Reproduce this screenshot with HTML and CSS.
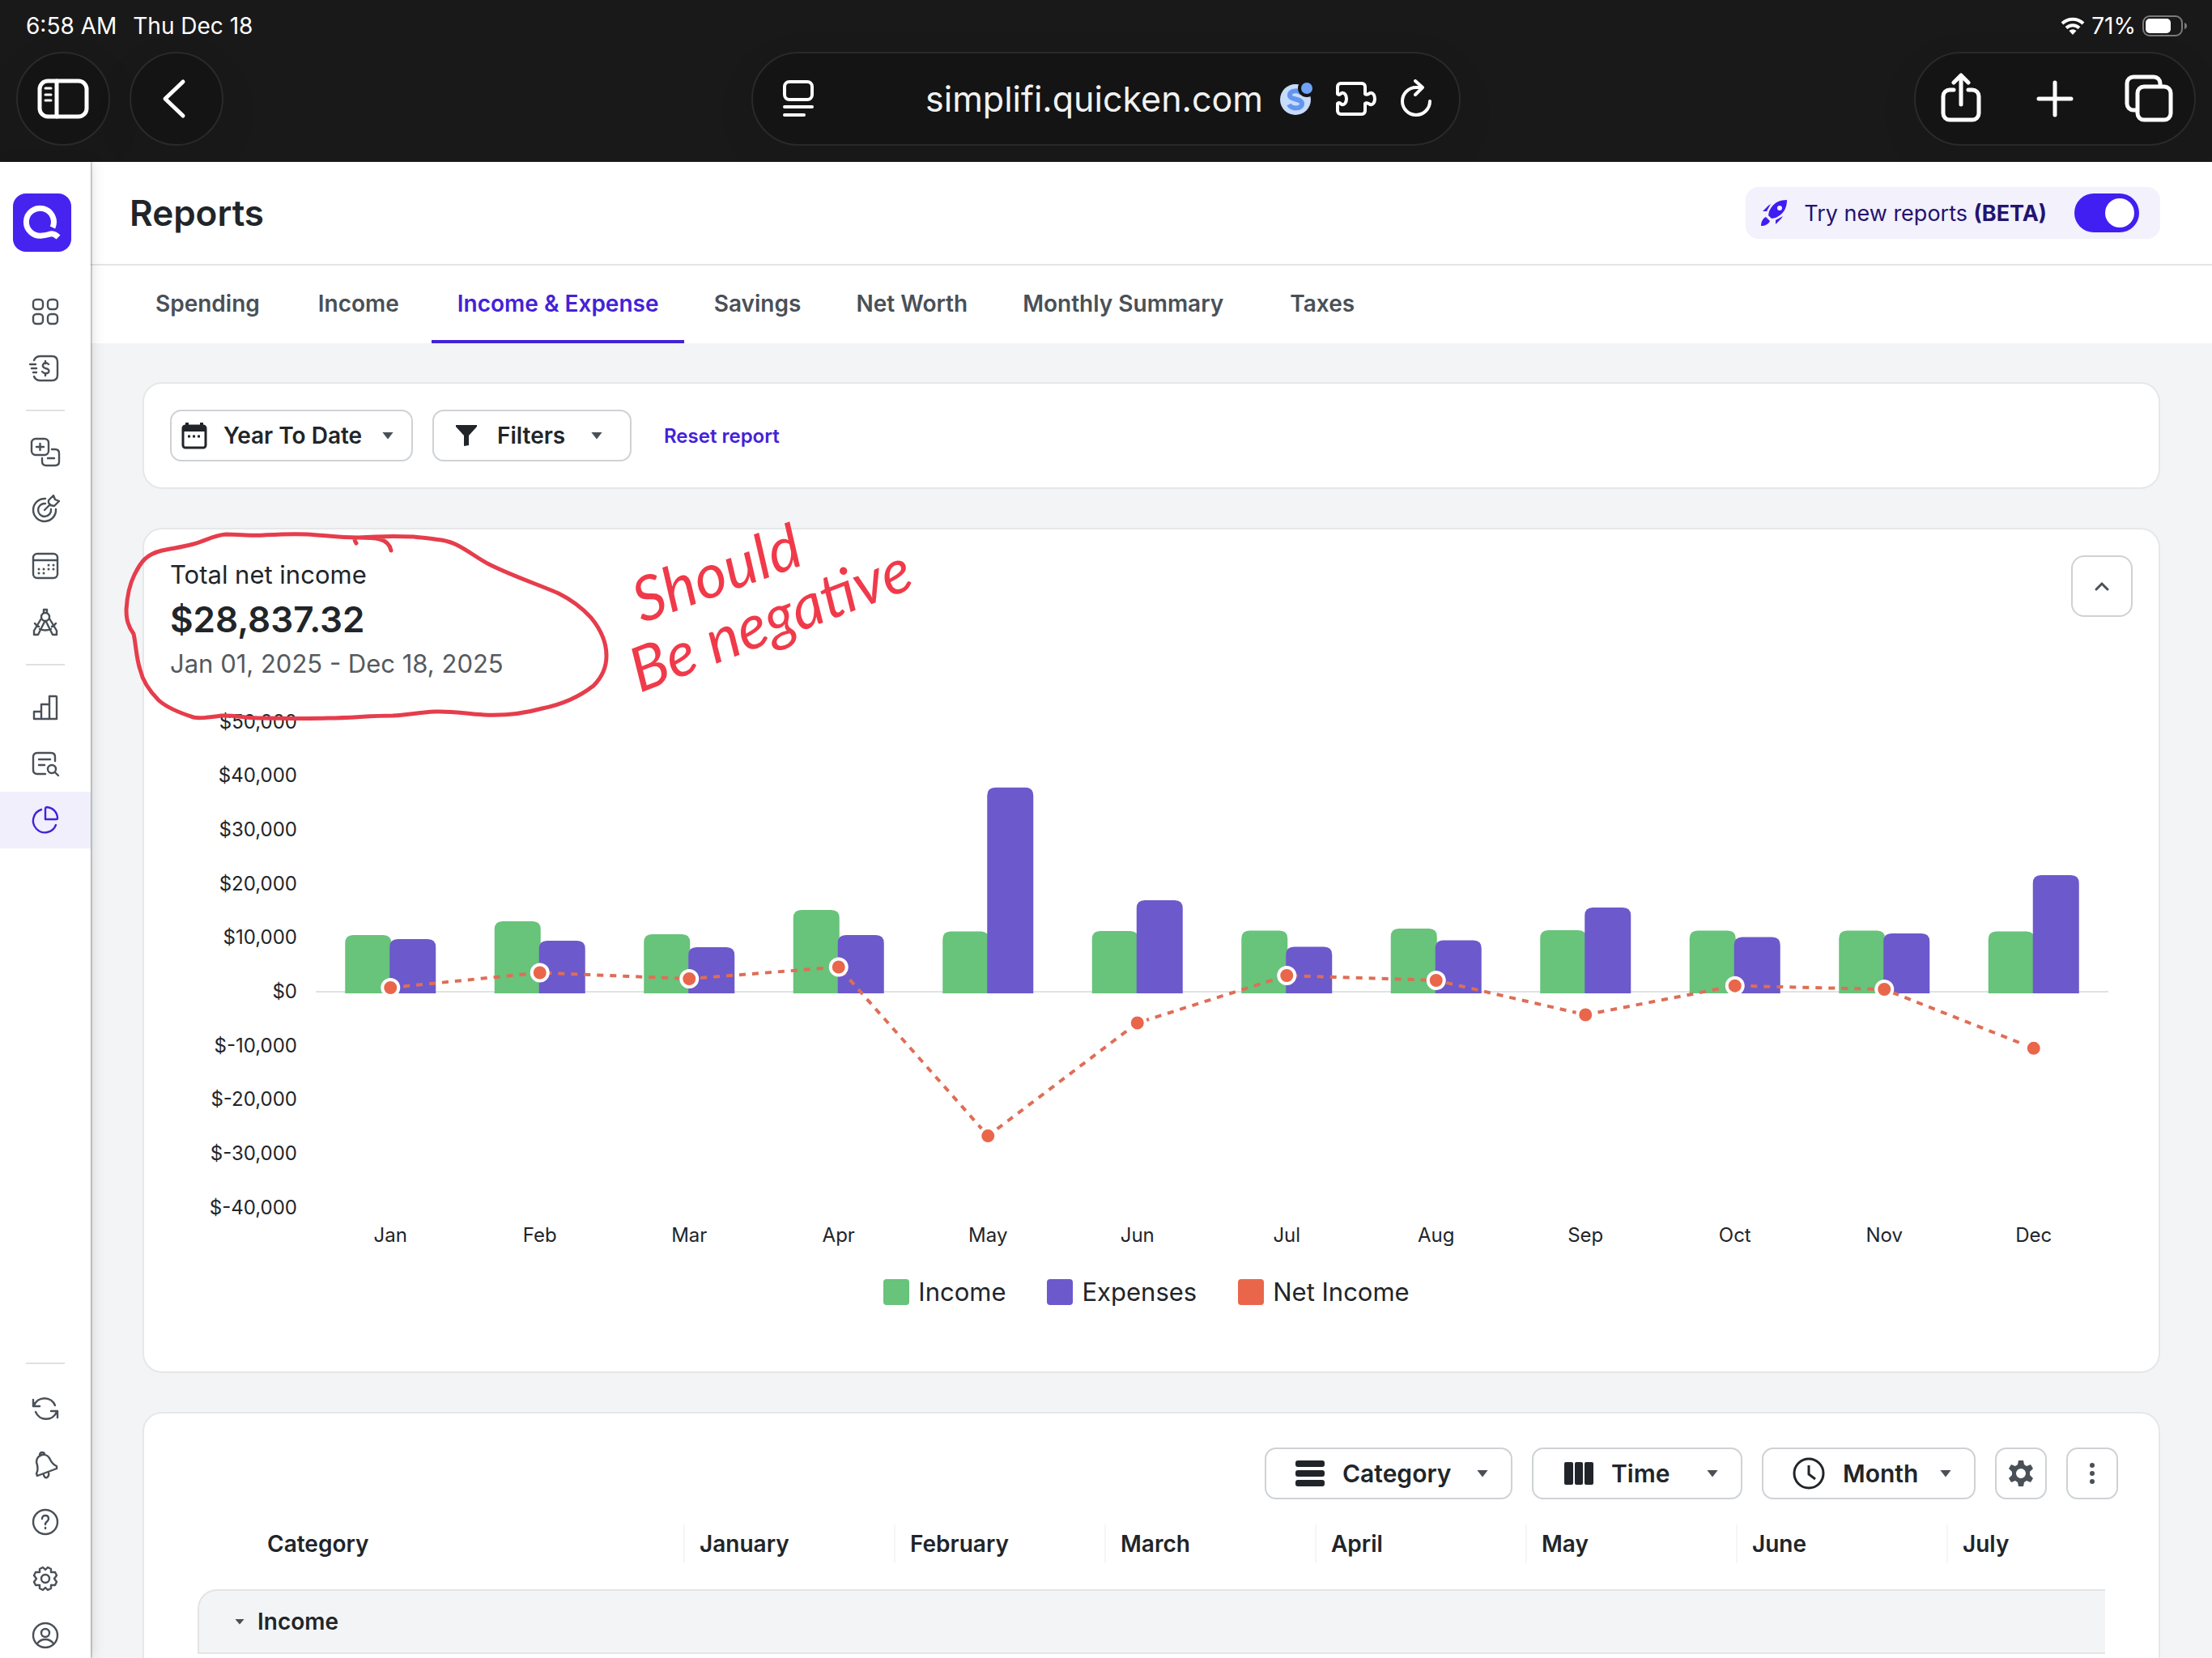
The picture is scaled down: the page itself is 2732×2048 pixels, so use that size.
FILE: index.html
```html
<!DOCTYPE html>
<html lang="en">
<head>
  <meta charset="UTF-8">
  <meta name="viewport" content="width=device-width, initial-scale=1">
  <title>Reports - Income &amp; Expense</title>
  <link rel="stylesheet" href="styles.css">
</head>
<body>
  <!-- Browser chrome -->
  <header class="chrome">
    <div class="status-bar">
      <div class="status-left">
        <span>6:58 AM</span>
        <span>Thu Dec 18</span>
      </div>
      <div class="status-right">
        <svg class="wifi" width="30" height="22" viewBox="0 0 30 22">
          <path d="M2 8 a18.500 18.500 0 0 1 26 0" stroke="#fff" stroke-width="4" fill="none"/>
          <path d="M7 13.500 a11.500 11.500 0 0 1 16 0" stroke="#fff" stroke-width="4" fill="none"/>
          <path d="M15 22 l-4.500 -5 a6.500 6.500 0 0 1 9 0 z" fill="#fff"/>
        </svg>
        <span>71%</span>
        <svg width="56" height="26" viewBox="0 0 56 26">
          <rect x="1" y="1" width="48" height="24" rx="8" fill="none" stroke="#7b7b7b" stroke-width="2"/>
          <rect x="4" y="4" width="31" height="18" rx="5" fill="#fff"/>
          <path d="M52 9 q3 1 3 4 t-3 4 z" fill="#7b7b7b"/>
        </svg>
      </div>
    </div>
    <div class="toolbar">
      <div class="toolbar-left">
        <button type="button" class="round-btn" aria-label="Show sidebar">
          <svg width="64" height="52" viewBox="0 0 64 52" class="ink">
            <rect x="3" y="4" width="58" height="44" rx="10"/>
            <path d="M24 4 V48"/>
            <path class="ink-thin" d="M10 13 H17 M10 21 H17 M10 28 H17"/>
          </svg>
        </button>
        <button type="button" class="round-btn" aria-label="Back">
          <svg width="64" height="52" viewBox="0 0 64 52" class="ink">
            <path d="M40 5 L18 26 L40 47"/>
          </svg>
        </button>
      </div>
      <div class="address">
        <button type="button" class="plain-btn" aria-label="Reader">
          <svg width="40" height="48" viewBox="0 0 40 48" class="ink ink-mid">
            <rect x="3" y="3" width="34" height="22" rx="6"/>
            <path d="M3 34 H37 M3 44 H27"/>
          </svg>
        </button>
        <div class="address-right">
          <span class="url">simplifi.quicken.com</span>
          <svg width="42" height="42" viewBox="0 0 42 42">
            <circle cx="20" cy="22" r="19" fill="#c7dcfb"/>
            <path d="M28 15 c-3 -5 -14 -5 -15 1 c-1 7 15 4 15 11 c0 7 -13 7 -16 1" fill="none" stroke="#6496f0" stroke-width="6"/>
            <circle cx="34" cy="8" r="11" fill="#141414"/>
            <circle cx="34" cy="8" r="7" fill="#6fa3f7"/>
          </svg>
          <button type="button" class="plain-btn" aria-label="Extensions">
            <svg width="54" height="48" viewBox="0 0 54 48" class="ink ink-mid">
              <path d="M8 5 H34 a4 4 0 0 1 4 4 V18 c2 2 4 0 6 -1 c8 -2 8 16 0 14 c-2 -1 -4 -3 -6 -1 V39 a4 4 0 0 1 -4 4 H8 a4 4 0 0 1 -4 -4 V30 c2 -2 4 0 5 1 c8 2 8 -16 0 -14 c-1 1 -3 3 -5 1 V9 a4 4 0 0 1 4 -4 z"/>
            </svg>
          </button>
          <button type="button" class="plain-btn" aria-label="Reload">
            <svg width="42" height="48" viewBox="0 0 42 48" class="ink ink-mid">
              <path d="M38 27 a17 17 0 1 1 -17 -17 h6"/>
              <path d="M20 2 L29 10 L20 19"/>
            </svg>
          </button>
        </div>
      </div>
      <div class="toolbar-right">
        <div class="pill">
          <button type="button" class="plain-btn" aria-label="Share">
            <svg width="52" height="64" viewBox="0 0 52 64" class="ink">
              <path d="M17 21 H12 a8 8 0 0 0 -8 8 V50 a8 8 0 0 0 8 8 H40 a8 8 0 0 0 8 -8 V29 a8 8 0 0 0 -8 -8 H35"/>
              <path d="M26 39 V4 M17 12 L26 3 L35 12"/>
            </svg>
          </button>
          <button type="button" class="plain-btn" aria-label="New tab">
            <svg width="52" height="52" viewBox="0 0 52 52" class="ink">
              <path d="M28 6 V46 M8 26 H48"/>
            </svg>
          </button>
          <button type="button" class="plain-btn" aria-label="Tabs">
            <svg width="60" height="60" viewBox="0 0 60 60" class="ink">
              <rect x="16" y="15" width="41" height="41" rx="8"/>
              <path d="M15 44 H11 a8 8 0 0 1 -8 -8 V11 a8 8 0 0 1 8 -8 H36 a8 8 0 0 1 8 8 V14"/>
            </svg>
          </button>
        </div>
      </div>
    </div>
  </header>

  <div class="app">
    <!-- Left navigation -->
    <nav class="sidebar" aria-label="Main">
      <a href="#" class="logo" aria-label="Home">
        <svg width="72" height="72" viewBox="0 0 72 72">
          <rect width="72" height="72" rx="16" fill="#4723f0"/>
          <path d="M49 42 A17 17 0 1 0 36 52 C45 52 48 46 56 54" fill="none" stroke="#fff" stroke-width="7"/>
        </svg>
      </a>
      <a href="#" class="nav-item" aria-label="Dashboard">
        <svg viewBox="0 0 40 40"><rect x="5" y="5" width="12" height="12" rx="4"/><rect x="23" y="5" width="12" height="12" rx="4"/><rect x="5" y="23" width="12" height="12" rx="4"/><rect x="23" y="23" width="12" height="12" rx="4"/></svg>
      </a>
      <a href="#" class="nav-item" aria-label="Spending plan">
        <svg viewBox="0 0 40 40"><path d="M6 10 q2 -5 8 -5 H28 q7 0 7 7 V28 q0 7 -7 7 H14 q-6 0 -8 -5"/><path d="M1 15 H8 M3 20 H9 M5 25 H9"/><path d="M24 15 q-3 -3 -6 -1 q-3 4 2 6 q6 1 4 5 q-4 3 -8 -1 M20 11 V14 M20 26 V29"/></svg>
      </a>
      <hr class="nav-divider">
      <a href="#" class="nav-item" aria-label="Transactions">
        <svg viewBox="0 0 40 40"><rect x="3" y="3" width="21" height="20" rx="5"/><path d="M9 13 H18 M13.500 9 V17"/><path d="M28 16 H32 q5 0 5 5 V31 q0 5 -5 5 H21 q-5 0 -5 -5 V27 M23 27 H31"/></svg>
      </a>
      <a href="#" class="nav-item" aria-label="Goals">
        <svg viewBox="0 0 40 40"><path d="M20 7 A14 14 0 1 0 33 20 M20 13 A8 8 0 1 0 27 20 M19 21 L26 14"/><path d="M24 12 V9 L30 3 L32 8 L37 10 L31 16 L26 15 z"/></svg>
      </a>
      <a href="#" class="nav-item" aria-label="Bills">
        <svg viewBox="0 0 40 40"><rect x="5" y="5" width="30" height="30" rx="5"/><path d="M5 13 H35"/><path class="dots" d="M12 24 h0 M18 24 h0 M24 19 h0 M30 19 h0 M12 29 h0 M18 29 h0 M24 24 h0 M30 24 h0"/></svg>
      </a>
      <a href="#" class="nav-item" aria-label="Planning">
        <svg viewBox="0 0 40 40"><circle cx="20" cy="13" r="5"/><path d="M18 8 V4 H22 V8"/><path d="M15 15 L6 30 V35 H11 L19 19 M25 15 L34 30 V35 H29 L21 19 M13 28 q7 3 14 0 M7 21 q2 3 5 4 M33 21 q-2 3 -5 4"/></svg>
      </a>
      <hr class="nav-divider">
      <a href="#" class="nav-item" aria-label="Investments">
        <svg viewBox="0 0 40 40"><path d="M6 35 V26 H15 M15 35 V17 H25 M25 35 V7 H33 q1 0 1 1 V35 H6"/></svg>
      </a>
      <a href="#" class="nav-item" aria-label="Watchlist">
        <svg viewBox="0 0 40 40"><path d="M20 33 H10 q-5 0 -5 -5 V12 q0 -5 5 -5 H27 q5 0 5 5 V17 M12 15 H26 M12 22 H19"/><circle cx="28" cy="27" r="5"/><path d="M32 31 L36 35"/></svg>
      </a>
      <a href="#" class="nav-item active" aria-label="Reports" aria-current="page">
        <svg viewBox="0 0 40 40"><path d="M15 7 A14.500 14.500 0 1 0 33 26"/><path d="M20 6 q0 -2 2 -2 A14 14 0 0 1 35 18 q0 1 -2 1 H20 z"/></svg>
      </a>

      <div class="nav-bottom">
        <hr class="nav-divider">
        <a href="#" class="nav-item" aria-label="Sync">
          <svg viewBox="0 0 40 40"><path d="M5 9 V17 H13 M6 16 A14 14 0 0 1 32 16 M35 31 V23 H27 M34 24 A14 14 0 0 1 8 24"/></svg>
        </a>
        <a href="#" class="nav-item" aria-label="Notifications">
          <svg viewBox="0 0 40 40"><path d="M10 33 L9 30 Q12 25 9 16 Q9 9 16 7 Q23 6 26 13 Q29 19 34 21 L34 24 z M13 8 q0 -4 3 -4 t3 3 M18 32 q1 4 4 3 q3 -2 2 -6"/></svg>
        </a>
        <a href="#" class="nav-item" aria-label="Help">
          <svg viewBox="0 0 40 40"><circle cx="20" cy="20" r="15"/><path d="M16 16 q0 -4 4 -4 t4 4 q0 2 -2 3.500 t-2 3.500 M20 27 v1"/></svg>
        </a>
        <a href="#" class="nav-item" aria-label="Settings">
          <svg viewBox="0 0 40 40"><circle cx="20" cy="20" r="5"/><path d="M17 6 l3 3 l3 -3 l4 2 v4 h5 l2 4 l-3 4 l3 4 l-2 4 h-5 v4 l-4 2 l-3 -3 l-3 3 l-4 -2 v-4 h-5 l-2 -4 l3 -4 l-3 -4 l2 -4 h5 v-4 z"/></svg>
        </a>
        <a href="#" class="nav-item" aria-label="Account">
          <svg viewBox="0 0 40 40"><circle cx="20" cy="20" r="15"/><circle cx="20" cy="17" r="5"/><path d="M10 30 q4 -5 10 -5 t10 5"/></svg>
        </a>
      </div>
    </nav>

    <main class="main">
      <div class="page-header">
        <h1>Reports</h1>
        <label class="beta" for="betaToggle">
          <svg width="34" height="34" viewBox="0 0 34 34" fill="#3f1df2">
            <path d="M33 1 C22 1 15 6 11 15 L10 20 L14 24 L19 23 C28 19 33 12 33 1 z M24 8 a3 3 0 1 1 0 6 a3 3 0 1 1 0 -6 z" fill-rule="evenodd"/>
            <path d="M10 8 L3 15 L8 15 L13 6 z M26 24 L19 31 L19 26 L28 21 z"/>
            <path d="M7 22 C3 24 1 28 1 33 C6 33 10 31 12 27 z"/>
          </svg>
          <span>Try new reports <b>(BETA)</b></span>
          <input type="checkbox" role="switch" id="betaToggle" class="toggle" checked>
        </label>
      </div>

      <nav class="tabs" aria-label="Reports">
        <a href="#">Spending</a>
        <a href="#">Income</a>
        <a href="#" class="active" aria-current="page">Income &amp; Expense</a>
        <a href="#">Savings</a>
        <a href="#">Net Worth</a>
        <a href="#">Monthly Summary</a>
        <a href="#">Taxes</a>
      </nav>

      <div class="content">
        <section class="card filter-card">
          <label class="dropdown dropdown-date">
            <svg width="32" height="36" viewBox="0 0 32 36">
              <path d="M7 2 V8 M25 2 V8" stroke="#212529" stroke-width="4"/>
              <rect x="2" y="6" width="28" height="27" rx="3" fill="none" stroke="#212529" stroke-width="3"/>
              <path d="M2 6 H30 V13 H2 z" fill="#212529"/>
              <path d="M8 19 h3 M14 19 h3 M20 19 h3" stroke="#212529" stroke-width="3"/>
            </svg>
            <select aria-label="Date range"><option>Year To Date</option></select>
            <span class="caret"></span>
          </label>
          <button type="button" class="dropdown dropdown-filter" aria-haspopup="true">
            <svg width="28" height="28" viewBox="0 0 28 28"><path d="M1 1 H27 V3 L17 14 V26 L11 27 V14 L1 3 z" fill="#212529"/></svg>
            <span>Filters</span>
            <span class="caret"></span>
          </button>
          <button type="button" class="link-btn">Reset report</button>
        </section>

        <section class="card chart-card">
          <div class="summary">
            <div class="totals">
              <p class="total-label">Total net income</p>
              <p class="total-value">$28,837.32</p>
              <p class="total-range">Jan 01, 2025 - Dec 18, 2025</p>
            </div>
            <button type="button" class="collapse-btn" aria-label="Collapse chart">
              <svg width="20" height="14" viewBox="0 0 20 14"><path d="M3 11 L10 4 L17 11" fill="none" stroke="#495057" stroke-width="3" stroke-linecap="round"/></svg>
            </button>
          </div>
          <svg class="chart" id="chart" viewBox="0 0 2424 680" role="img" aria-label="Income, expenses and net income by month"></svg>
          <ul class="legend">
            <li><span class="swatch swatch-income"></span>Income</li>
            <li><span class="swatch swatch-expenses"></span>Expenses</li>
            <li><span class="swatch swatch-net"></span>Net Income</li>
          </ul>

          <!-- Pen markup drawn over the card -->
          <svg class="markup" width="1000" height="260" viewBox="178 654 1000 260">
            <path d="M440 671 C438 668 436 664 442 664 C462 664 480 664 483 680 M442 664 C470 662 490 662 511 663 C540 666 552 667 564 673 C580 681 590 690 604 697 C634 712 665 722 690 733 C708 742 720 752 730 763 C744 780 749 795 749 810 C749 826 743 837 733 847 C715 861 695 870 670 875 C645 882 620 884 598 883 C575 882 560 878 538 879 C515 880 505 883 485 884 C455 884 435 887 405 887 C375 888 345 887 319 887 C300 887 290 883 273 884 C258 886 248 888 239 886 C220 880 205 873 196 865 C182 851 176 840 173 827 C168 812 168 796 165 783 C158 773 156 765 156 753 C157 736 160 722 166 710 C174 694 180 685 200 680 C214 677 224 676 239 672 C254 668 264 661 279 660 C296 660 310 662 326 661 C344 660 360 659 379 660 C400 661 418 664 442 664"/>
            <text x="793" y="770" transform="rotate(-20 793 770)">Should</text>
            <text x="790" y="856" transform="rotate(-21 790 856)">Be negative</text>
          </svg>
        </section>

        <section class="card table-card">
          <div class="table-tools">
            <label class="dropdown dropdown-large dropdown-category">
              <svg width="36" height="32" viewBox="0 0 36 32" fill="#212529"><rect width="36" height="8" rx="3"/><rect y="12" width="36" height="8" rx="3"/><rect y="24" width="36" height="8" rx="3"/></svg>
              <select aria-label="Rows"><option>Category</option></select>
              <span class="caret"></span>
            </label>
            <label class="dropdown dropdown-large dropdown-time">
              <svg width="36" height="28" viewBox="0 0 36 28" fill="#212529"><rect width="11" height="28" rx="2"/><rect x="13" width="10" height="28" rx="2"/><rect x="25" width="11" height="28" rx="2"/></svg>
              <select aria-label="Columns"><option>Time</option></select>
              <span class="caret"></span>
            </label>
            <label class="dropdown dropdown-large dropdown-month">
              <svg width="40" height="40" viewBox="0 0 40 40" fill="none" stroke="#212529" stroke-width="3"><circle cx="20" cy="20" r="18"/><path d="M20 10 V21 L28 27"/></svg>
              <select aria-label="Interval"><option>Month</option></select>
              <span class="caret"></span>
            </label>
            <button type="button" class="icon-btn" aria-label="Table settings">
              <svg width="32" height="32" viewBox="0 0 32 32"><path d="M13 0 h6 l1 5 l3 2 l5 -2 l3 5 l-4 4 v4 l4 4 l-3 5 l-5 -2 l-3 2 l-1 5 h-6 l-1 -5 l-3 -2 l-5 2 l-3 -5 l4 -4 v-4 l-4 -4 l3 -5 l5 2 l3 -2 z M16 10 a6 6 0 1 0 0 12 a6 6 0 1 0 0 -12 z" fill="#495057" fill-rule="evenodd"/></svg>
            </button>
            <button type="button" class="icon-btn" aria-label="More options">
              <svg width="8" height="28" viewBox="0 0 8 28" fill="#495057"><circle cx="4" cy="4" r="3"/><circle cx="4" cy="14" r="3"/><circle cx="4" cy="24" r="3"/></svg>
            </button>
          </div>
          <table class="report">
            <thead>
              <tr>
                <th class="col-category" scope="col">Category</th>
                <th scope="col">January</th>
                <th scope="col">February</th>
                <th scope="col">March</th>
                <th scope="col">April</th>
                <th scope="col">May</th>
                <th scope="col">June</th>
                <th class="col-last" scope="col">July</th>
              </tr>
            </thead>
            <tbody>
              <tr>
                <th class="group" scope="rowgroup" colspan="8"><span class="group-label"><span class="caret caret-small"></span>Income</span></th>
              </tr>
            </tbody>
          </table>
        </section>
      </div>
    </main>
  </div>

  <script src="script.js"></script>
</body>
</html>
```

FILE: styles.css
```css
* {
  box-sizing: border-box;
}

body {
  margin: 0;
  height: 100vh;
  display: flex;
  flex-direction: column;
  overflow: hidden;
  font-family: "Inter", "Liberation Sans", sans-serif;
  font-size: 28px;
  color: #212529;
  background: #f3f4f6;
}

button,
select {
  font: inherit;
  color: inherit;
  cursor: pointer;
}

a {
  text-decoration: none;
}

svg {
  flex-shrink: 0;
}

/* Browser chrome */
.chrome {
  flex-shrink: 0;
  height: 200px;
  background: #191919;
  color: #fff;
}

.status-bar {
  display: flex;
  align-items: center;
  justify-content: space-between;
  height: 64px;
  padding: 0 30px 0 32px;
}

.status-left {
  display: flex;
  gap: 20px;
}

.status-right {
  display: flex;
  align-items: center;
  gap: 8px;
}

.toolbar {
  display: grid;
  grid-template-columns: 1fr minmax(0, 876px) 1fr;
  padding: 0 20px;
}

.toolbar-left {
  display: flex;
  gap: 24px;
}

.toolbar-right {
  display: flex;
  justify-content: flex-end;
}

.round-btn,
.address,
.pill {
  height: 116px;
  border: 2px solid #2a2a2a;
  border-radius: 58px;
  background: #141414;
  box-shadow: 0 16px 60px rgba(0, 0, 0, 0.05);
}

.round-btn {
  display: flex;
  align-items: center;
  justify-content: center;
  width: 116px;
  padding: 0;
}

.address {
  display: flex;
  align-items: center;
  justify-content: space-between;
  padding: 0 32px 0 36px;
}

.address-right {
  display: flex;
  align-items: center;
  gap: 26px;
}

.url {
  margin-right: -6px;
  font-size: 43px;
  color: #f2f2f2;
}

.pill {
  display: flex;
  align-items: center;
  justify-content: space-between;
  width: 348px;
  padding: 0 26px 0 30px;
}

.plain-btn {
  display: flex;
  padding: 0;
  border: 0;
  background: none;
}

.ink {
  fill: none;
  stroke: #fff;
  stroke-width: 5;
  stroke-linecap: round;
  stroke-linejoin: round;
}

.ink-mid {
  stroke-width: 4;
}

.ink-thin {
  stroke-width: 3;
}

/* App layout */
.app {
  flex: 1;
  min-height: 0;
  display: flex;
}

.sidebar {
  z-index: 1;
  flex-shrink: 0;
  display: flex;
  flex-direction: column;
  width: 112px;
  background: #fff;
  box-shadow: 1px 0 2px rgba(0, 0, 0, 0.35), 2px 0 16px rgba(0, 0, 0, 0.12);
}

.logo {
  display: flex;
  margin: 39px 0 39px 16px;
}

.nav-item {
  display: flex;
  align-items: center;
  justify-content: center;
  height: 70px;
}

.nav-item svg {
  width: 40px;
  height: 40px;
  fill: none;
  stroke: #495057;
  stroke-width: 2.4;
  stroke-linecap: round;
  stroke-linejoin: round;
}

.nav-item .dots {
  stroke-width: 3;
}

.nav-item.active {
  background: #f0effb;
}

.nav-item.active svg {
  stroke: #4322d8;
}

.nav-divider {
  width: 48px;
  height: 2px;
  margin: 16px auto;
  border: 0;
  background: #dfe1e3;
}

/* the last item runs slightly below the fold */
.nav-bottom {
  margin-top: auto;
  margin-bottom: -7px;
}

.nav-bottom .nav-divider {
  margin-bottom: 20px;
}

.main {
  flex: 1;
  min-width: 0;
  overflow: hidden;
}

.page-header {
  display: flex;
  align-items: center;
  justify-content: space-between;
  height: 128px;
  padding: 0 64px 0 48px;
  border-bottom: 2px solid #e5e5e6;
  background: #fff;
}

h1 {
  margin: 0;
  font-size: 44px;
  font-weight: 600;
  line-height: 48px;
}

.beta {
  display: flex;
  align-items: center;
  height: 64px;
  padding: 0 26px 0 18px;
  border-radius: 16px;
  background: #f2f1fc;
  color: #24136f;
  font-size: 27px;
}

.beta span {
  margin: 0 34px 0 20px;
}

.toggle {
  appearance: none;
  width: 80px;
  height: 48px;
  margin: 0;
  padding: 6px;
  border-radius: 24px;
  background: #adb5bd;
  cursor: pointer;
}

.toggle::before {
  content: "";
  display: block;
  width: 36px;
  height: 36px;
  border-radius: 50%;
  background: #fff;
}

.toggle:checked {
  background: #411ef2;
}

.toggle:checked::before {
  margin-left: auto;
}

.tabs {
  display: flex;
  gap: 4px;
  height: 96px;
  padding-left: 48px;
  background: #fff;
}

.tabs a {
  display: flex;
  align-items: center;
  justify-content: center;
  min-width: 172px;
  padding: 2px 32px 0;
  border-bottom: 4px solid transparent;
  font-weight: 600;
  color: #495057;
}

.tabs a.active {
  border-color: #4322d8;
  color: #4322d8;
}

.content {
  display: flex;
  flex-direction: column;
  gap: 48px;
  padding: 48px 64px;
}

.card {
  border: 2px solid #e5e7e8;
  border-radius: 24px;
  background: #fff;
}

/* Filters */
.filter-card {
  display: flex;
  align-items: center;
  gap: 24px;
  height: 132px;
  padding: 0 32px;
}

.dropdown {
  display: flex;
  align-items: center;
  height: 64px;
  padding: 0 20px;
  border: 2px solid #ced2d5;
  border-radius: 14px;
  background: #fff;
  font-weight: 600;
}

.dropdown select {
  appearance: none;
  flex: 1;
  min-width: 0;
  padding: 0;
  border: 0;
  background: none;
}

.dropdown-date {
  gap: 20px;
  width: 300px;
  padding: 0 22px 0 12px;
}

.dropdown-filter {
  gap: 24px;
  width: 246px;
  padding: 0 34px 0 26px;
}

.dropdown-filter .caret {
  margin-left: auto;
}

.dropdown-large {
  gap: 22px;
  font-size: 30px;
}

.dropdown-category {
  width: 306px;
  padding: 0 28px 0 36px;
}

.dropdown-time {
  width: 260px;
  padding: 0 28px 0 38px;
}

.dropdown-month {
  width: 264px;
  padding: 0 28px 0 36px;
}

.caret {
  width: 14px;
  height: 9px;
  background: #495057;
  clip-path: polygon(0 0, 100% 0, 50% 100%);
}

.caret-small {
  width: 12px;
  height: 7px;
}

.link-btn {
  padding: 0 16px;
  border: 0;
  background: none;
  font-size: 24px;
  font-weight: 600;
  color: #4322d8;
}

/* Chart */
.chart-card {
  position: relative;
  padding: 32px 32px 78px;
}

.summary {
  display: flex;
  align-items: flex-start;
  justify-content: space-between;
}

.totals p {
  margin: 0;
  font-size: 31px;
  line-height: 48px;
}

.totals .total-value {
  font-size: 44px;
  font-weight: 600;
  line-height: 62px;
}

.totals .total-range {
  color: #555a5e;
}

.collapse-btn {
  display: flex;
  align-items: center;
  justify-content: center;
  width: 76px;
  height: 76px;
  padding: 0;
  border: 2px solid #ced2d5;
  border-radius: 16px;
  background: #fff;
}

.chart {
  display: block;
  width: 100%;
  height: auto;
  margin-top: 26px;
  overflow: visible;
  font-size: 24px;
}

.chart text {
  fill: #212529;
}

.chart .axis-y {
  text-anchor: end;
}

.chart .axis-x {
  text-anchor: middle;
}

.chart .bar-income {
  fill: #68c37b;
}

.chart .bar-expenses {
  fill: #6c59cb;
}

.chart .zero {
  stroke: #e0e2e3;
  stroke-width: 2;
}

.chart .net-line {
  fill: none;
  stroke: #de6e57;
  stroke-width: 4;
  stroke-dasharray: 8 8;
}

.chart .net-point {
  fill: #ea664b;
  stroke: #fff;
  stroke-width: 4;
}

.legend {
  display: flex;
  justify-content: center;
  gap: 51px;
  margin: 26px 12px 0 0;
  padding: 0;
  list-style: none;
  font-size: 31px;
  line-height: 40px;
}

.legend li {
  display: flex;
  align-items: center;
  gap: 11px;
}

.swatch {
  width: 32px;
  height: 32px;
  border-radius: 4px;
}

.swatch-income {
  background: #68c37b;
}

.swatch-expenses {
  background: #6c59cb;
}

.swatch-net {
  background: #ea664b;
}

.markup {
  position: absolute;
  top: 0;
  left: 0;
  overflow: visible;
  pointer-events: none;
}

.markup path {
  fill: none;
  stroke: #e63d4c;
  stroke-width: 5;
  stroke-linecap: round;
}

.markup text {
  font-family: "Lato", sans-serif;
  font-size: 76px;
  font-style: italic;
  fill: #f03a4a;
}

/* Table */
.table-card {
  padding: 42px 50px 64px 66px;
}

.table-tools {
  display: flex;
  justify-content: flex-end;
  gap: 24px;
}

.icon-btn {
  display: flex;
  align-items: center;
  justify-content: center;
  width: 64px;
  height: 64px;
  padding: 0;
  border: 2px solid #ced2d5;
  border-radius: 14px;
  background: #fff;
}

.report {
  width: calc(100% - 16px);
  margin-top: 31px;
  border-collapse: separate;
  border-spacing: 0;
  table-layout: fixed;
}

.report th {
  width: 260px;
  height: 48px;
  padding: 0 18px;
  border-left: 2px solid #f6f6f7;
  font-size: 28px;
  font-weight: 600;
  text-align: left;
}

.report .col-category {
  width: 600px;
  padding-left: 86px;
  border-left: 0;
}

.report .col-last {
  width: auto;
}

/* space between the column heads and the first group */
.report thead::after {
  content: "";
  display: table-row;
  height: 32px;
}

.report .group {
  height: 80px;
  padding: 0 44px;
  border: 2px solid #e2e4e6;
  border-right: 0;
  border-radius: 24px 0 0 0;
  background: #f3f4f6;
}

.group-label {
  display: flex;
  align-items: center;
  gap: 16px;
}
```

FILE: script.js
```js
const months = [
  { name: 'Jan', income: 10500, expenses: 9750, net: 750 },
  { name: 'Feb', income: 13050, expenses: 9450, net: 3520 },
  { name: 'Mar', income: 10650, expenses: 8250, net: 2400 },
  { name: 'Apr', income: 15150, expenses: 10500, net: 4575 },
  { name: 'May', income: 11175, expenses: 37800, net: -26700 },
  { name: 'Jun', income: 11250, expenses: 16950, net: -5775 },
  { name: 'Jul', income: 11325, expenses: 8325, net: 3000 },
  { name: 'Aug', income: 11700, expenses: 9525, net: 2100 },
  { name: 'Sep', income: 11400, expenses: 15600, net: -4275 },
  { name: 'Oct', income: 11325, expenses: 10125, net: 1100 },
  { name: 'Nov', income: 11325, expenses: 10800, net: 450 },
  { name: 'Dec', income: 11175, expenses: 21600, net: -10470 }
];

const left = 180;
const right = 2394;
const zero = 355;
const step = 66.7; // height of $10,000
const slot = (right - left) / months.length;
const barWidth = 57;

const y = (value) => zero - value / 10000 * step;

// Bar with rounded top corners
function bar(x, value, cls) {
  const top = y(value);
  return `<path class="${cls}" d="M${x} ${zero + 2} V${top + 10} q0 -10 10 -10 h${barWidth - 20} q10 0 10 10 V${zero + 2} z"/>`;
}

let html = '';

for (let v = 50000; v >= -40000; v -= 10000) {
  html += `<text class="axis-y" x="157" y="${y(v) + 8}">$${v.toLocaleString('en-US')}</text>`;
}

html += `<line class="zero" x1="${left}" y1="${zero}" x2="${right}" y2="${zero}"/>`;

const points = months.map((m, i) => [left + slot * (i + 0.5), y(m.net)]);

months.forEach((m, i) => {
  const x = points[i][0];
  html += bar(x - 56, m.income, 'bar-income');
  html += bar(x - 1, m.expenses, 'bar-expenses');
  html += `<text class="axis-x" x="${x}" y="664">${m.name}</text>`;
});

html += `<polyline class="net-line" points="${points.map((p) => p.join(',')).join(' ')}"/>`;
points.forEach((p) => {
  html += `<circle class="net-point" cx="${p[0]}" cy="${p[1]}" r="10"/>`;
});

document.getElementById('chart').innerHTML = html;
```
